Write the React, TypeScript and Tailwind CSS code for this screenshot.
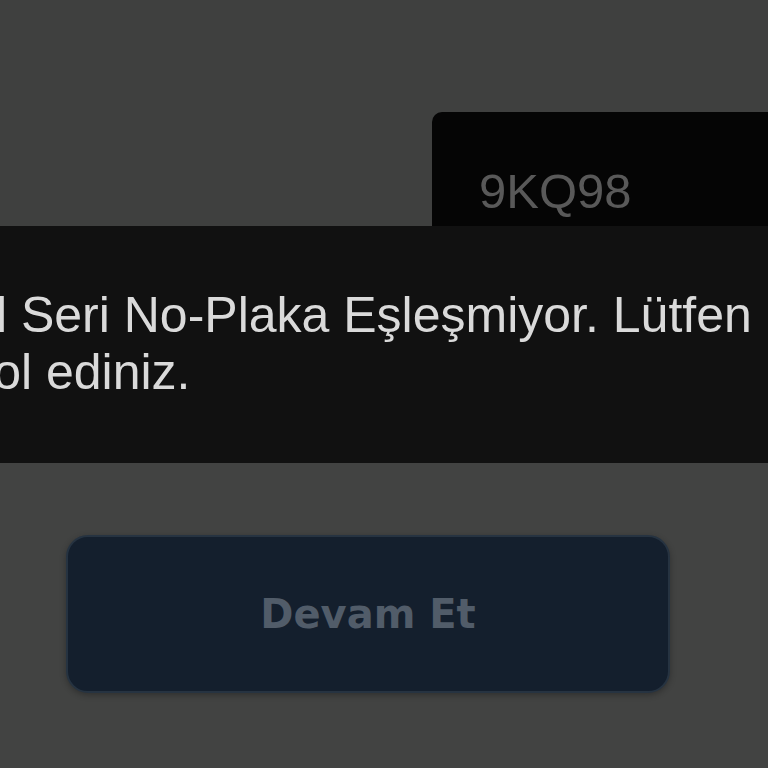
import React from 'react';

// Plaka / seri no doğrulama ekranı, hata bildirimi açık
export default function App() {
  return (
    <div className="w-[768px] h-[768px] overflow-hidden bg-[#424342] flex flex-col" style={{ fontFamily: '"Liberation Sans", Arial, sans-serif' }}>
      {/* Üst alan: seri no kutusu */}
      <div className="h-[226px] shrink-0 bg-[#3f403f] pt-[112px] pl-[432px]">
        <div className="h-full bg-[#050505] rounded-tl-[10px] pl-[47px] pt-[55px]">
          <span className="block text-[49px] leading-none text-[#595959]">9KQ98</span>
        </div>
      </div>

      {/* Hata bildirimi */}
      <div className="h-[237px] shrink-0 bg-[#111111] overflow-hidden pt-[61px]">
        <p className="ml-[-118px] whitespace-nowrap text-[50px] leading-[57px] text-[#dadada]">
          Tescil Seri No-Plaka Eşleşmiyor. Lütfen
          <br />
          kontrol ediniz.
        </p>
      </div>

      {/* Devam butonu */}
      <div className="flex-1 pt-[72px] pl-[66px] bg-[#424342]">
        <button
          className="w-[604px] h-[158px] rounded-[22px] bg-[#141f2d] border-2 border-[#263341] shadow-[0_2px_6px_rgba(0,0,0,0.3)] flex items-center justify-center"
          style={{ fontFamily: '"DejaVu Sans", Verdana, sans-serif' }}
        >
          <span className="text-[40px] font-bold text-[#515c69] leading-none">Devam Et</span>
        </button>
      </div>
    </div>
  );
}
